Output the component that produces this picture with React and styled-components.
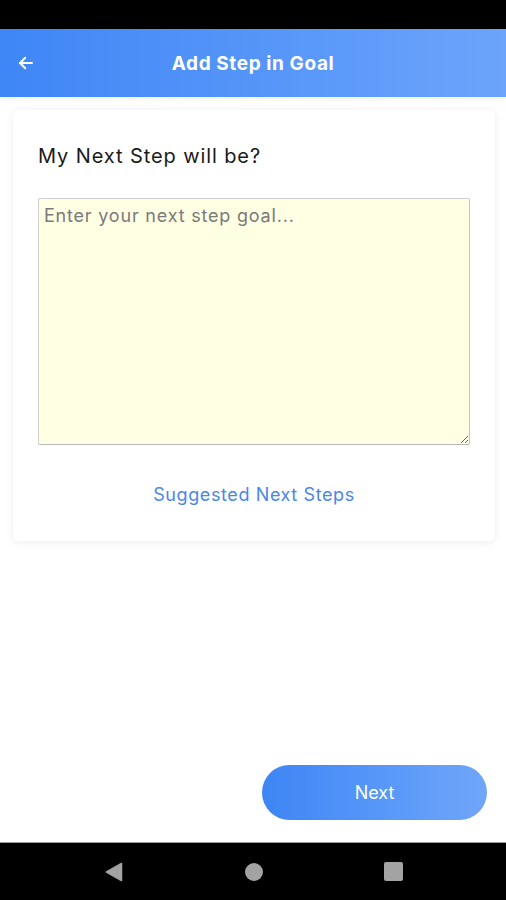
import React from 'react';
import styled, { createGlobalStyle } from 'styled-components';

const GlobalStyle = createGlobalStyle`
  html, body {
    margin: 0;
    padding: 0;
    background: #000;
  }
  * {
    box-sizing: border-box;
  }
  body {
    font-family: "Inter", "Open Sans", sans-serif;
  }
`;

const App = () => {
    return (
        <>
            <GlobalStyle/>
            <Screen>
                <StatusBar/>
                <Header>
                    <BackButton aria-label="back">
                        <svg width="18" height="18" viewBox="0 0 24 24" fill="none" stroke="#fff" strokeWidth="2.6" strokeLinecap="round" strokeLinejoin="round">
                            <path d="M20 12H4"/>
                            <path d="M11 5l-7 7 7 7"/>
                        </svg>
                    </BackButton>
                    <Title>Add Step in Goal</Title>
                </Header>
                <Body>
                    <Card>
                        <Question>My Next Step will be?</Question>
                        <GoalInput placeholder="Enter your next step goal..."/>
                        <SuggestLink href="#">Suggested Next Steps</SuggestLink>
                    </Card>
                    <Footer>
                        <NextButton>Next</NextButton>
                    </Footer>
                </Body>
                <NavBar>
                    <svg width="20" height="22" viewBox="0 0 20 22">
                        <path d="M17.5 2.5v17L2.5 11z" fill="#a3a3a3" stroke="#a3a3a3" strokeWidth="1.5" strokeLinejoin="round"/>
                    </svg>
                    <NavCircle/>
                    <NavSquare/>
                </NavBar>
            </Screen>
        </>
    )
}
export default App;

const Screen = styled.div`
  width: 506px;
  height: 900px;
  display: flex;
  flex-direction: column;
  background: #fff;
  overflow: hidden;
`;

const StatusBar = styled.div`
  height: 29px;
  background: #000;
  flex-shrink: 0;
`;

const Header = styled.header`
  height: 68px;
  flex-shrink: 0;
  display: flex;
  align-items: center;
  padding: 0 16px;
  background: linear-gradient(90deg, #3f86f6 0%, #5595f8 50%, #6ca4fb 100%);
  box-shadow: 0 2px 6px rgba(0, 0, 0, 0.06);
  position: relative;
`;

const BackButton = styled.button`
  background: transparent;
  border: none;
  padding: 0;
  width: 20px;
  height: 20px;
  display: flex;
  align-items: center;
  justify-content: center;
  cursor: pointer;
`;

const Title = styled.h1`
  flex: 1;
  margin: 0 20px 0 0;
  text-align: center;
  color: #fff;
  font-size: 19px;
  font-weight: 700;
  letter-spacing: 0.6px;
`;

const Body = styled.main`
  flex: 1;
  display: flex;
  flex-direction: column;
  padding: 13px 11px 0 13px;
`;

const Card = styled.section`
  background: #fff;
  border-radius: 6px;
  box-shadow: 0 1px 8px rgba(0, 0, 0, 0.08);
  padding: 34px 25px 34px 25px;
  display: flex;
  flex-direction: column;
`;

const Question = styled.h2`
  margin: 0 0 30px 0;
  font-size: 20px;
  font-weight: 400;
  color: #1a1a1a;
  letter-spacing: 0.9px;
  line-height: 24px;
`;

const GoalInput = styled.textarea`
  height: 247px;
  width: 100%;
  resize: vertical;
  background: #ffffe3;
  border: 1px solid #cfcfcf;
  border-bottom-color: #b9b9b9;
  border-right-color: #c3c3c3;
  border-radius: 2px;
  padding: 6px 5px;
  font-family: "Inter", "Open Sans", sans-serif;
  font-size: 18px;
  letter-spacing: 0.8px;
  color: #333;
  outline: none;
  &::placeholder {
    color: #7a7a7a;
  }
`;

const SuggestLink = styled.a`
  align-self: center;
  margin-top: 38px;
  font-size: 18px;
  line-height: 24px;
  color: #4a86ec;
  text-decoration: none;
  letter-spacing: 0.6px;
`;

const Footer = styled.div`
  margin-top: auto;
  display: flex;
  justify-content: flex-end;
  padding: 0 8px 22px 0;
`;

const NextButton = styled.button`
  width: 225px;
  height: 55px;
  border: none;
  border-radius: 28px;
  background: linear-gradient(90deg, #3e85f5 0%, #5898f8 55%, #70a6f9 100%);
  color: #fff;
  font-family: "Inter", "Open Sans", sans-serif;
  font-size: 18px;
  cursor: pointer;
`;

const NavBar = styled.nav`
  height: 58px;
  flex-shrink: 0;
  background: #000;
  border-top: 1px solid #9a9a9a;
  display: flex;
  align-items: center;
  justify-content: center;
  gap: 121px;
`;

const NavCircle = styled.div`
  width: 18px;
  height: 18px;
  border-radius: 50%;
  background: #a3a3a3;
`;

const NavSquare = styled.div`
  width: 19px;
  height: 19px;
  border-radius: 2px;
  background: #a3a3a3;
`;
